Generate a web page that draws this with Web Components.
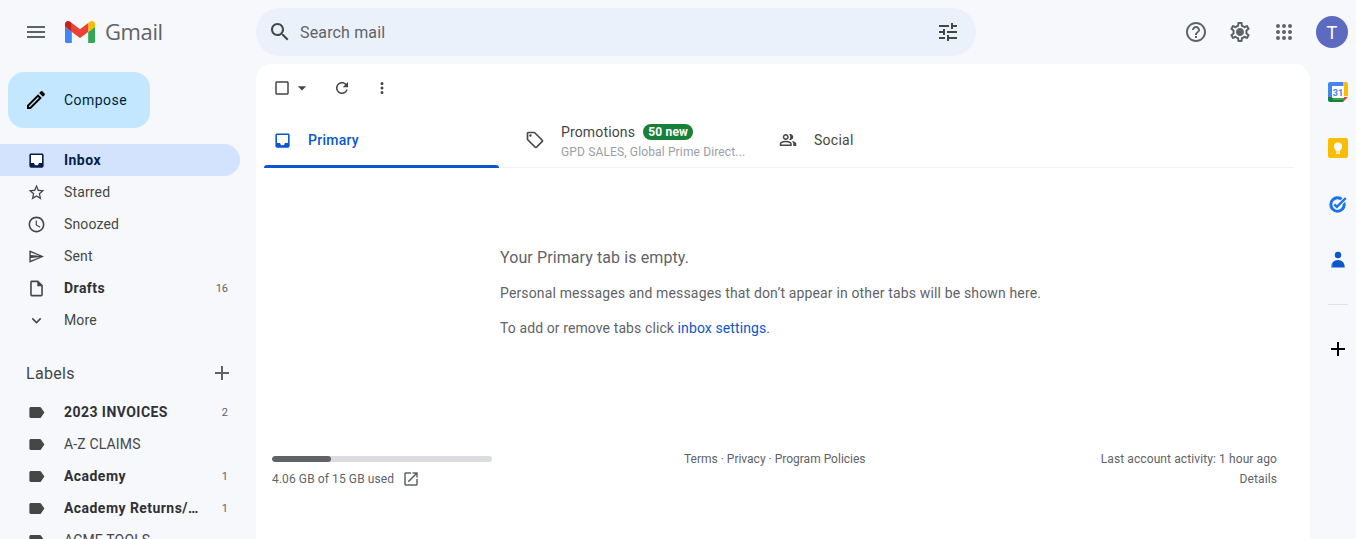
<!DOCTYPE html>
<html lang="en">
<head>
<meta charset="utf-8">
<title>Gmail</title>
<style>
html,body{margin:0;height:539px;overflow:hidden;background:#f6f8fc;font-family:Roboto,"Liberation Sans",sans-serif;font-size:14px;color:#444746;letter-spacing:.15px}
</style>
</head>
<body>
<gm-app>
  <gm-header slot="header"></gm-header>
  <gm-sidebar slot="sidebar"></gm-sidebar>
  <gm-main slot="main"></gm-main>
  <gm-rail slot="rail"></gm-rail>
</gm-app>
<script>
const PATHS={
menu:'M3 18h18v-2H3v2zm0-5h18v-2H3v2zm0-7v2h18V6H3z',
search:'M15.5 14h-.79l-.28-.27C15.41 12.59 16 11.11 16 9.5 16 5.91 13.09 3 9.5 3S3 5.91 3 9.5 5.91 16 9.5 16c1.61 0 3.09-.59 4.23-1.57l.27.28v.79l5 4.99L20.49 19l-4.99-5zm-6 0C7.01 14 5 11.99 5 9.5S7.01 5 9.5 5 14 7.01 14 9.5 11.99 14 9.5 14z',
tune:'M3 17v2h6v-2H3zM3 5v2h10V5H3zm10 16v-2h8v-2h-8v-2h-2v6h2zM7 9v2H3v2h4v2h2V9H7zm14 4v-2H11v2h10zm-6-4h2V7h4V5h-4V3h-2v6z',
help:'M11 18h2v-2h-2v2zm1-16C6.48 2 2 6.48 2 12s4.48 10 10 10 10-4.48 10-10S17.52 2 12 2zm0 18c-4.41 0-8-3.59-8-8s3.59-8 8-8 8 3.59 8 8-3.59 8-8 8zm0-14c-2.21 0-4 1.79-4 4h2c0-1.1.9-2 2-2s2 .9 2 2c0 2-3 1.75-3 5h2c0-2.25 3-2.5 3-5 0-2.21-1.79-4-4-4z',
settings:'M19.43 12.98c.04-.32.07-.64.07-.98 0-.34-.03-.66-.07-.98l2.11-1.65c.19-.15.24-.42.12-.64l-2-3.46c-.09-.16-.26-.25-.44-.25-.06 0-.12.01-.17.03l-2.49 1c-.52-.4-1.08-.73-1.69-.98l-.38-2.65C14.46 2.18 14.25 2 14 2h-4c-.25 0-.46.18-.49.42l-.38 2.65c-.61.25-1.17.59-1.69.98l-2.49-1c-.06-.02-.12-.03-.18-.03-.17 0-.34.09-.43.25l-2 3.46c-.13.22-.07.49.12.64l2.11 1.65c-.04.32-.07.65-.07.98 0 .33.03.66.07.98l-2.11 1.65c-.19.15-.24.42-.12.64l2 3.46c.09.16.26.25.44.25.06 0 .12-.01.17-.03l2.49-1c.52.4 1.08.73 1.69.98l.38 2.65c.03.24.24.42.49.42h4c.25 0 .46-.18.49-.42l.38-2.65c.61-.25 1.17-.59 1.69-.98l2.49 1c.06.02.12.03.18.03.17 0 .34-.09.43-.25l2-3.46c.12-.22.07-.49-.12-.64l-2.11-1.65zm-1.98-1.71c.04.31.05.52.05.73 0 .21-.02.43-.05.73l-.14 1.13.89.7 1.08.84-.7 1.21-1.27-.51-1.04-.42-.9.68c-.43.32-.84.56-1.25.73l-1.06.43-.16 1.13-.2 1.35h-1.4l-.19-1.35-.16-1.13-1.06-.43c-.43-.18-.83-.41-1.23-.71l-.91-.7-1.06.43-1.27.51-.7-1.21 1.08-.84.89-.7-.14-1.13c-.03-.31-.05-.54-.05-.74s.02-.43.05-.73l.14-1.13-.89-.7-1.08-.84.7-1.21 1.27.51 1.04.42.9-.68c.43-.32.84-.56 1.25-.73l1.06-.43.16-1.13.2-1.35h1.39l.19 1.35.16 1.13 1.06.43c.43.18.83.41 1.23.71l.91.7 1.06-.43 1.27-.51.7 1.21-1.07.85-.89.7.14 1.13zM12 8c-2.21 0-4 1.79-4 4s1.79 4 4 4 4-1.79 4-4-1.79-4-4-4z',
edit:'M14.06 9.02l.92.92L5.92 19H5v-.92l9.06-9.06M17.66 3c-.25 0-.51.1-.7.29l-1.83 1.83 3.75 3.75 1.83-1.83c.39-.39.39-1.02 0-1.41l-2.34-2.34c-.2-.2-.45-.29-.71-.29zm-3.6 3.19L3 17.25V21h3.75L17.81 9.94l-3.75-3.75z',
inbox:'M19 3H5c-1.1 0-2 .9-2 2v14c0 1.1.9 2 2 2h14c1.1 0 2-.9 2-2V5c0-1.1-.9-2-2-2zm0 12h-4c0 1.66-1.35 3-3 3s-3-1.34-3-3H5V5h14v10z',
star:'M22 9.24l-7.19-.62L12 2 9.19 8.63 2 9.24l5.46 4.73L5.82 21 12 17.27 18.18 21l-1.63-7.03L22 9.24zM12 15.4l-3.76 2.27 1-4.28-3.32-2.88 4.38-.38L12 6.1l1.71 4.04 4.38.38-3.32 2.88 1 4.28L12 15.4z',
clock:'M11.99 2C6.47 2 2 6.48 2 12s4.47 10 9.99 10C17.52 22 22 17.52 22 12S17.52 2 11.99 2zM12 20c-4.42 0-8-3.58-8-8s3.58-8 8-8 8 3.58 8 8-3.58 8-8 8zm.5-13H11v6l5.25 3.15.75-1.23-4.5-2.67z',
send:'M3 4L21.5 12 3 20zM4.800 6.800V10.200L16 11.200zM4.800 13.800V17.200L16 12.800z',
file:'M14 2H6c-1.1 0-1.99.9-1.99 2L4 20c0 1.1.89 2 1.99 2H18c1.1 0 2-.9 2-2V8l-6-6zM6 20V4h7v5h5v11H6z',
chevron:'M16.59 8.59L12 13.17 7.41 8.59 6 10l6 6 6-6z',
label:'M17.63 5.84C17.27 5.33 16.67 5 16 5L5 5.01C3.9 5.01 3 5.9 3 7v10c0 1.1.9 1.99 2 1.99L16 19c.67 0 1.27-.33 1.63-.84L22 12l-4.37-6.16z',
plus:'M19 13h-6v6h-2v-6H5v-2h6V5h2v6h6v2z',
refresh:'M17.65 6.35C16.2 4.9 14.21 4 12 4c-4.42 0-7.99 3.58-7.99 8s3.57 8 7.99 8c3.73 0 6.84-2.55 7.73-6h-2.08c-.82 2.33-3.04 4-5.65 4-3.31 0-6-2.69-6-6s2.69-6 6-6c1.66 0 3.14.69 4.22 1.78L13 11h7V4l-2.35 2.35z',
check:'M19 5v14H5V5h14m0-2H5c-1.1 0-2 .9-2 2v14c0 1.1.9 2 2 2h14c1.1 0 2-.9 2-2V5c0-1.1-.9-2-2-2z',
caret:'M7 10l5 5 5-5z',
tag:'M21.41 11.58l-9-9C12.05 2.22 11.55 2 11 2H4c-1.1 0-2 .9-2 2v7c0 .55.22 1.05.59 1.42l9 9c.36.36.86.58 1.41.58s1.05-.22 1.41-.59l7-7c.37-.36.59-.86.59-1.41s-.23-1.06-.59-1.42zM13 20.01L4 11V4h7v-.01l9 9-7 7.02zM6.5 5a1.5 1.5 0 1 0 0 3 1.5 1.5 0 0 0 0-3z',
people:'M1 20v-2.8q0-.85.438-1.563.437-.712 1.162-1.087 1.55-.775 3.15-1.163Q7.35 13 9 13t3.25.387q1.6.388 3.15 1.163.725.375 1.162 1.087Q17 16.35 17 17.2V20H1Zm18 0v-3q0-1.1-.612-2.112-.613-1.013-1.738-1.738 1.275.15 2.4.512 1.125.363 2.1.888.9.5 1.375 1.112Q23 15.275 23 16v4h-4ZM9 12q-1.65 0-2.825-1.175Q5 9.65 5 8q0-1.65 1.175-2.825Q7.35 4 9 4q1.65 0 2.825 1.175Q13 6.35 13 8q0 1.65-1.175 2.825Q10.65 12 9 12Zm10-4q0 1.65-1.175 2.825Q16.65 12 15 12q-.275 0-.7-.062-.425-.063-.7-.138.675-.8 1.037-1.775Q15 9.05 15 8q0-1.05-.363-2.025Q14.275 5 13.6 4.2q.35-.125.7-.162Q14.65 4 15 4q1.65 0 2.825 1.175Q19 6.35 19 8ZM3 18h12v-.8q0-.275-.138-.5-.137-.225-.362-.35-1.35-.675-2.725-1.012Q10.4 15 9 15t-2.775.338Q4.85 15.675 3.5 16.35q-.225.125-.362.35Q3 16.925 3 17.2v.8Zm6-8q.825 0 1.413-.588Q11 8.825 11 8q0-.825-.587-1.412Q9.825 6 9 6q-.825 0-1.412.588Q7 7.175 7 8q0 .825.588 1.412Q8.175 10 9 10Z',
open:'M19 19H5V5h7V3H5c-1.11 0-2 .9-2 2v14c0 1.1.89 2 2 2h14c1.1 0 2-.9 2-2v-7h-2v7zM14 3v2h3.59l-9.83 9.83 1.41 1.41L19 6.41V10h2V3h-7z',
dots:'M12 8a2 2 0 1 0 0-4 2 2 0 0 0 0 4zm0 2a2 2 0 1 0 0 4 2 2 0 0 0 0-4zm0 6a2 2 0 1 0 0 4 2 2 0 0 0 0-4z',
apps:'M6 8a2 2 0 1 0 0-4 2 2 0 0 0 0 4zm6 0a2 2 0 1 0 0-4 2 2 0 0 0 0 4zm6 0a2 2 0 1 0 0-4 2 2 0 0 0 0 4zM6 14a2 2 0 1 0 0-4 2 2 0 0 0 0 4zm6 0a2 2 0 1 0 0-4 2 2 0 0 0 0 4zm6 0a2 2 0 1 0 0-4 2 2 0 0 0 0 4zM6 20a2 2 0 1 0 0-4 2 2 0 0 0 0 4zm6 0a2 2 0 1 0 0-4 2 2 0 0 0 0 4zm6 0a2 2 0 1 0 0-4 2 2 0 0 0 0 4z'
};
customElements.define('gm-icon',class extends HTMLElement{
  constructor(){super();this.attachShadow({mode:'open'})}
  connectedCallback(){
    const s=this.getAttribute('size')||24,c=this.getAttribute('color')||'#444746',bg=this.getAttribute('back');
    this.shadowRoot.innerHTML=`<style>:host{display:block;flex:none;width:${s}px;height:${s}px;line-height:0}svg{display:block}</style>
    <svg width="${s}" height="${s}" viewBox="0 0 24 24">${bg?`<rect x="4" y="4" width="16" height="15" fill="${bg}"/>`:''}<path fill="${c}" d="${PATHS[this.getAttribute('name')]}"/></svg>`;
  }
});
customElements.define('gm-app',class extends HTMLElement{constructor(){super();this.attachShadow({mode:'open'}).innerHTML=`<style>
:host{display:grid;grid-template-columns:256px 1054px 46px;grid-template-rows:64px 475px;width:1356px;height:539px;overflow:hidden}
::slotted([slot=header]){grid-column:1/4}
</style><slot name="header"></slot><slot name="sidebar"></slot><slot name="main"></slot><slot name="rail"></slot>`}});

customElements.define('gm-header',class extends HTMLElement{constructor(){super();this.attachShadow({mode:'open'}).innerHTML=`<style>
:host{display:flex;align-items:center;height:64px}
.brand{width:256px;flex:none;display:flex;align-items:center;padding-left:24px;box-sizing:border-box}
.logo{margin-left:17px;display:block;flex:none}
.word{margin:-2px 0 0 10px;font:22px/30px "Open Sans",Roboto,sans-serif;letter-spacing:-.4px;color:#5f6368}
.search{width:720px;height:48px;flex:none;box-sizing:border-box;background:#eaf1fb;border-radius:24px;display:flex;align-items:center;padding:0 16px 0 12px}
.ph{margin-left:8px;flex:1;font-size:16px;color:#5f6368}
.acts{margin-left:auto;display:flex;align-items:center;gap:20px;padding-right:8px}
.avatar{width:32px;height:32px;border-radius:50%;background:#5c6bc0;color:#fff;font-size:18px;display:flex;align-items:center;justify-content:center}
</style>
<div class="brand"><gm-icon name="menu" color="#5f6368"></gm-icon>
<svg class="logo" width="30" height="22.5" viewBox="52 42 88 66"><path fill="#4285f4" d="M58 108h14V74L52 59v43c0 3.32 2.69 6 6 6"/><path fill="#34a853" d="M120 108h14c3.32 0 6-2.69 6-6V59l-20 15"/><path fill="#fbbc04" d="M120 48v26l20-15v-8c0-7.42-8.47-11.65-14.4-7.2"/><path fill="#ea4335" d="M72 74V48l24 18 24-18v26L96 92"/><path fill="#c5221f" d="M52 51v8l20 15V48l-5.6-4.2c-5.94-4.45-14.4-.22-14.4 7.2"/></svg>
<span class="word">Gmail</span></div>
<div class="search"><gm-icon name="search"></gm-icon><span class="ph">Search mail</span><gm-icon name="tune"></gm-icon></div>
<div class="acts"><gm-icon name="help" color="#5f6368"></gm-icon><gm-icon name="settings" color="#5f6368"></gm-icon><gm-icon name="apps" color="#5f6368"></gm-icon><div class="avatar">T</div></div>`}});

customElements.define('gm-nav-item',class extends HTMLElement{
  constructor(){super();this.attachShadow({mode:'open'})}
  connectedCallback(){
    const a=this.hasAttribute('active'),b=this.hasAttribute('bold')||a,cnt=this.getAttribute('count')||'';
    const col=a?'#041e49':'#444746',ic=this.getAttribute('icon');
    this.shadowRoot.innerHTML=`<style>
:host{display:flex;align-items:center;width:240px;height:32px;box-sizing:border-box;padding:0 12px 0 26.5px;border-radius:0 16px 16px 0;${a?'background:#d3e3fd;':''}color:${a?'#041e49':b?'#303134':'#444746'};font-weight:${b?700:400};${b?'letter-spacing:.45px;':''}}
.t{margin-left:18.5px;flex:1;min-width:0;white-space:nowrap}
.c{margin-left:auto;font-size:11px;font-weight:400;letter-spacing:0;color:#5f6368}
</style><gm-icon size="19" name="${ic}" color="${col}" ${a?'back="#fff"':''}></gm-icon><span class="t"><slot></slot></span><span class="c">${cnt}</span>`;
  }
});

customElements.define('gm-sidebar',class extends HTMLElement{constructor(){super();this.attachShadow({mode:'open'}).innerHTML=`<style>
:host{display:block;overflow:hidden;height:475px}
.compose{margin:8px 0 16px 8px;width:142px;height:56px;background:#c2e7ff;border-radius:16px;display:flex;align-items:center;padding-left:16px;box-sizing:border-box;color:#001d35;font-weight:400;letter-spacing:.45px}
.compose span{margin-left:16px}
.lh{display:flex;align-items:center;justify-content:space-between;height:40px;margin-top:17px;margin-bottom:3px;padding:0 22px 0 26px;font-size:16px;letter-spacing:.3px;width:240px;box-sizing:border-box}
</style>
<div class="compose"><gm-icon name="edit" color="#000"></gm-icon><span>Compose</span></div>
<gm-nav-item icon="inbox" active>Inbox</gm-nav-item>
<gm-nav-item icon="star">Starred</gm-nav-item>
<gm-nav-item icon="clock">Snoozed</gm-nav-item>
<gm-nav-item icon="send">Sent</gm-nav-item>
<gm-nav-item icon="file" bold count="16">Drafts</gm-nav-item>
<gm-nav-item icon="chevron">More</gm-nav-item>
<div class="lh"><span>Labels</span><gm-icon name="plus" size="24" color="#5f6368" style="margin-right:-16px"></gm-icon></div>
<gm-nav-item icon="label" bold count="2">2023 INVOICES</gm-nav-item>
<gm-nav-item icon="label">A-Z CLAIMS</gm-nav-item>
<gm-nav-item icon="label" bold count="1">Academy</gm-nav-item>
<gm-nav-item icon="label" bold count="1">Academy Returns/…</gm-nav-item>
<gm-nav-item icon="label">ACME TOOLS</gm-nav-item>`}});

customElements.define('gm-tab',class extends HTMLElement{
  constructor(){super();this.attachShadow({mode:'open'})}
  connectedCallback(){
    const a=this.hasAttribute('active'),s=+(this.getAttribute('isize')||20),c=a?'#0b57d0':'#444746';
    this.shadowRoot.innerHTML=`<style>
:host{display:flex;align-items:center;height:56px;box-sizing:border-box;position:relative;color:${c};font-weight:${a?500:400}}
gm-icon{margin-left:${(20-s)/2}px}
.lbl{margin-left:${16+(20-s)/2}px;min-width:0;${this.hasAttribute('two')?'padding-top:4px;':''}}
:host([active])::after{content:"";position:absolute;left:0;right:0;bottom:0;height:3px;background:#0b57d0;border-radius:3px 3px 0 0}
</style><gm-icon size="${s}" name="${this.getAttribute('icon')}" color="${c}" ${a?'back="#fff"':''}></gm-icon><div class="lbl"><slot></slot></div>`;
  }
});

customElements.define('gm-main',class extends HTMLElement{constructor(){super();this.attachShadow({mode:'open'}).innerHTML=`<style>
:host{display:block;background:#fff;border-radius:16px 16px 0 0;height:475px;overflow:hidden}
.tb{display:flex;align-items:center;height:48px;padding-left:17px}
.tabs{display:grid;grid-template-columns:235px 271px 1fr;margin:0 16px 0 8px;border-bottom:1px solid #f1f3f4;height:56px;box-sizing:border-box;align-items:start}
gm-tab{height:56px}
.t1{padding-left:8px;letter-spacing:.25px}.t2{padding-left:26px}.t3{padding-left:8px;letter-spacing:.25px}
.pr{display:flex;align-items:center;height:16px;line-height:16px}
.badge{margin-left:8px;background:#188038;color:#fff;font-size:12px;font-weight:700;line-height:16px;height:16px;border-radius:8px;padding:0 5px;letter-spacing:.2px}
.sn{margin-top:4px;font-size:12px;line-height:16px;color:#9aa0a6;white-space:nowrap;letter-spacing:.14px}
.empty{padding:79px 0 0 244px;color:#5f6368}
.empty h1{margin:0;font-size:16px;font-weight:400;line-height:22px;letter-spacing:.1px}
.empty h1+p{margin-top:14px}
.empty p{margin:15px 0 0;line-height:20px}
.empty p+p{letter-spacing:.1px}
a{color:#0b57d0;text-decoration:none}
.ft{display:grid;grid-template-columns:412px auto 1fr;margin-top:113px;padding:0 33px 0 16px;font-size:12px;line-height:16px;color:#5f6368;letter-spacing:.1px}
.mid{letter-spacing:0}
.bar{width:220px;height:6px;border-radius:3px;background:#dadce0;margin-top:5px;overflow:hidden}
.bar i{display:block;width:59px;height:6px;background:#5f6368;border-radius:3px}
.use{display:flex;align-items:center;margin-top:9px;height:16px}
.use gm-icon{margin-left:8px}
.r{text-align:right}.r div+div{margin-top:4px}
</style>
<div class="tb"><gm-icon size="18" name="check"></gm-icon><gm-icon size="20" name="caret" style="margin-left:1px"></gm-icon><gm-icon size="18" name="refresh" style="margin-left:21px"></gm-icon><gm-icon size="18" name="dots" style="margin-left:22px"></gm-icon></div>
<div class="tabs">
<gm-tab class="t1" icon="inbox" isize="19" active>Primary</gm-tab>
<gm-tab class="t2" icon="tag" two><div class="pr">Promotions<span class="badge">50 new</span></div><div class="sn">GPD SALES, Global Prime Direct...</div></gm-tab>
<gm-tab class="t3" icon="people" isize="18">Social</gm-tab>
</div>
<div class="empty"><h1>Your Primary tab is empty.</h1>
<p>Personal messages and messages that don’t appear in other tabs will be shown here.</p>
<p>To add or remove tabs click <a href="#">inbox settings</a>.</p></div>
<div class="ft"><div><div class="bar"><i></i></div><div class="use">4.06 GB of 15 GB used<gm-icon size="18" name="open" color="#5f6368"></gm-icon></div></div>
<div class="mid">Terms · Privacy · Program Policies</div>
<div class="r"><div>Last account activity: 1 hour ago</div><div>Details</div></div></div>`}});

customElements.define('gm-rail',class extends HTMLElement{constructor(){super();this.attachShadow({mode:'open'}).innerHTML=`<style>
:host{display:block;height:475px}
.i{height:56px;display:flex;align-items:center;justify-content:center;margin-left:12px;width:32px}
svg{display:block}
hr{border:0;height:1px;background:#e1e3e6;width:20px;margin:16px 0 0 18px}
.p{margin:32px 0 0 16px}
text{font-family:Roboto,sans-serif;font-size:9px;font-weight:700;letter-spacing:0}
</style>
<div class="i"><svg width="20" height="20" viewBox="0 0 20 20"><path fill="#4285f4" d="M2 0h13v5H5v10H0V2a2 2 0 0 1 2-2z"/><path fill="#fbbc04" d="M15 0h3a2 2 0 0 1 2 2v12h-5z" /><path fill="#188038" d="M0 15h15v5H2a2 2 0 0 1-2-2z"/><path fill="#34a853" d="M5 15h10v3H5z"/><path fill="#ea4335" d="M15 15h5l-5 5z"/><rect x="4" y="4" width="12" height="12" fill="#fff"/><text x="10" y="13.5" text-anchor="middle" fill="#4285f4">31</text></svg></div>
<div class="i"><svg width="20" height="20" viewBox="0 0 20 20"><rect width="20" height="20" rx="2" fill="#fbbc04"/><circle cx="10" cy="8.5" r="4" fill="#fff"/><rect x="7.8" y="11" width="4.4" height="2.5" fill="#fff"/><rect x="8" y="14.3" width="4" height="1.5" fill="#fff"/></svg></div>
<div class="i"><svg width="20" height="20" viewBox="0 0 20 20"><circle cx="9.5" cy="10.5" r="6.7" fill="none" stroke="#1a73e8" stroke-width="3"/><path d="M6.3 10.3l2.6 2.6L17.8 4" fill="none" stroke="#f6f8fc" stroke-width="4.5"/><path d="M6.3 10.3l2.6 2.6L17.8 4" fill="none" stroke="#1a73e8" stroke-width="2.4"/></svg></div>
<div class="i"><svg width="20" height="20" viewBox="0 0 20 20"><circle cx="10" cy="5" r="3.2" fill="#0b57d0"/><path d="M3.3 17c0-4 2.5-7 6.7-7s6.7 3 6.7 7a.6.6 0 0 1-.6.6H3.9a.6.6 0 0 1-.6-.6z" fill="#0b57d0"/><path d="M3.3 15c.2-.8.5-1.6 1-2.3v4.900H3.900a.6.6 0 0 1-.6-.6z" fill="#8ab4f8"/></svg></div>
<hr>
<div class="p"><gm-icon name="plus" color="#000"></gm-icon></div>`}});
</script>
</body>
</html>
